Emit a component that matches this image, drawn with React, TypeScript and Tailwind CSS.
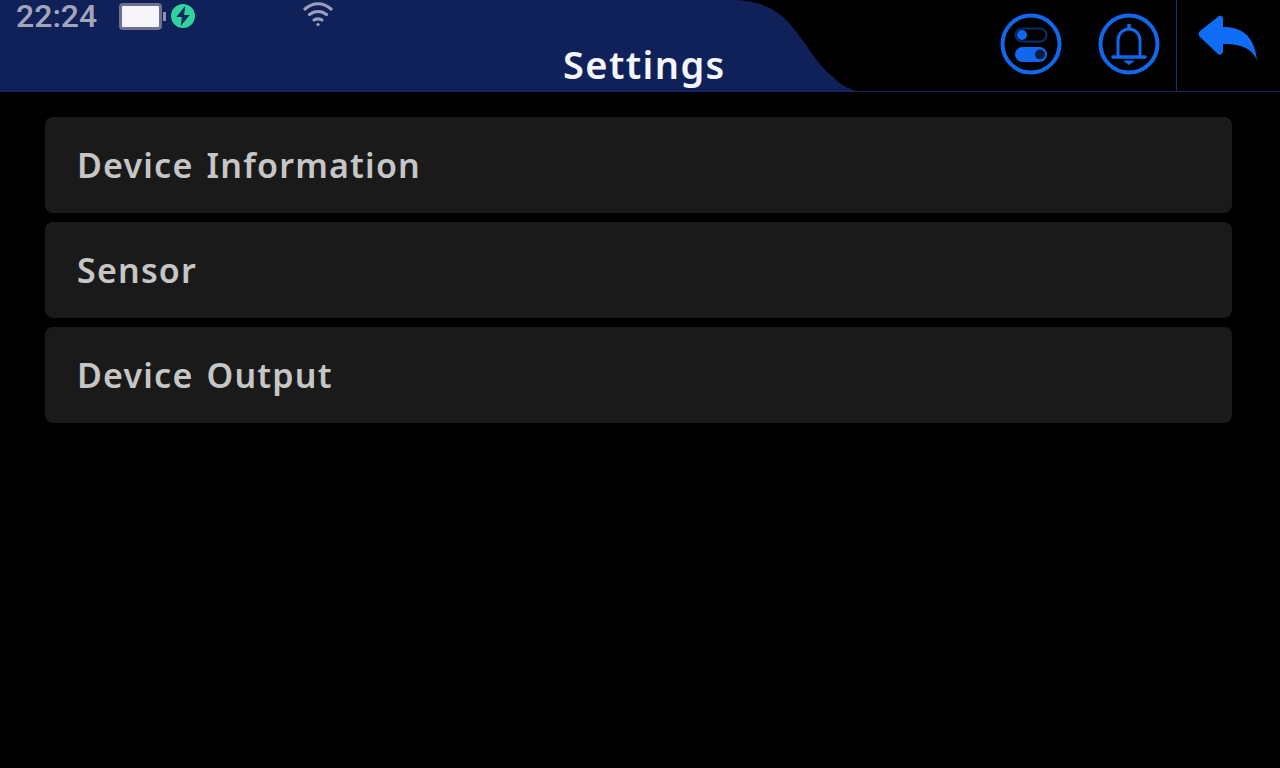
import React from 'react'

const items = ['Device Information', 'Sensor', 'Device Output']

const TogglesIcon = () => (
  <svg width="64" height="64" viewBox="0 0 64 64" fill="none">
    <circle cx="32" cy="32" r="28.5" stroke="#1168ee" strokeWidth="4" />
    <rect x="16.5" y="16.5" width="31" height="13" rx="6.5" stroke="#1168ee" strokeWidth="2" opacity="0.45" />
    <circle cx="23" cy="23" r="5" fill="#1168ee" />
    <rect x="16" y="35" width="32" height="15" rx="7.5" fill="#1168ee" />
    <circle cx="41" cy="42.500" r="5" fill="#0a1a40" />
  </svg>
)

const BellIcon = () => (
  <svg width="64" height="64" viewBox="0 0 64 64" fill="none">
    <circle cx="32" cy="32" r="28.500" stroke="#1168ee" strokeWidth="4" />
    <path d="M21 44V28a11 11 0 0 1 22 0v16" stroke="#1168ee" strokeWidth="3" />
    <path d="M32 12v6" stroke="#1168ee" strokeWidth="3.500" />
    <path d="M16 45h32" stroke="#1168ee" strokeWidth="3.500" strokeLinecap="round" />
    <path d="M26 48.500h12l-6 4.500z" fill="#1168ee" />
  </svg>
)

const BackIcon = () => (
  <svg width="64" height="50" viewBox="0 0 64 50" fill="#0f6df5">
    <path d="M22 1c2-1 4 0 4 3v8c16 0 31 6 34 33-6-13-18-16-34-16v7c0 3-3 5-5 3L3 22c-2-2-2-4 0-6z" />
  </svg>
)

const WifiIcon = () => (
  <svg width="30" height="26" viewBox="0 0 30 26" fill="none" stroke="#9b9fb8" strokeWidth="3.200" strokeLinecap="round">
    <path d="M2 8c8-7 18-7 26 0" />
    <path d="M6.500 13.500c5-4 12-4 17 0" />
    <path d="M11 19c2.500-1.500 5.500-1.500 8 0" />
    <circle cx="15" cy="23.500" r="1.200" fill="#9b9fb8" strokeWidth="1" />
  </svg>
)

export default function App() {
  return (
    <div className="h-[768px] w-[1280px] overflow-hidden bg-black font-['Noto_Sans',sans-serif]">
      {/* Header */}
      <header className="relative flex h-[92px] border-b border-[#15265f]">
        <svg className="absolute left-0 top-0" width="860" height="92" viewBox="0 0 860 92">
          <path d="M0 0H735C762 1 778 10 790 24C806 43 820 68 832 76C840 84 846 88 856 91H0z" fill="#10215a" />
        </svg>

        <div className="relative flex h-[32px] items-center pl-[16px]">
          <span className="w-[103px] font-['Roboto',sans-serif] text-[32px] leading-none font-medium text-[#a3a6ba]">22:24</span>
          <div className="flex h-[28px] w-[44px] items-center">
            <div className="h-[27px] w-[43px] rounded-[4px] border-[3px] border-[#6d7190] bg-[#f8f5fa]" />
          </div>
          <div className="h-[9px] w-[3px] bg-[#8e92aa]" />
          <div className="ml-[5px] flex h-[24px] w-[24px] items-center justify-center rounded-full bg-[#2fd3a0]">
            <svg width="16" height="20" viewBox="0 0 14 18" fill="#0c2a5c">
              <path d="M9 0 1 10h5l-1 8 8-10H8z" />
            </svg>
          </div>
          <div className="ml-[108px] pb-[4px]">
            <WifiIcon />
          </div>
        </div>

        <h1 className="absolute left-[563px] top-[36px] text-[38px] leading-[56px] font-semibold tracking-[1.400px] text-[#f4f6fb]">Settings</h1>

        <div className="relative ml-auto flex">
          <div className="flex items-center gap-[34px] pr-[15px] pb-[3px]">
            <TogglesIcon />
            <BellIcon />
          </div>
          <div className="flex w-[104px] justify-start border-l border-[#15306b] pt-[15px] pl-[20px]">
            <BackIcon />
          </div>
        </div>
      </header>

      {/* Menu rows */}
      <main className="flex flex-col gap-[9px] pt-[25px] pr-[48px] pl-[45px]">
        {items.map((item) => (
          <div key={item} className="flex h-[96px] items-center rounded-[8px] bg-[#1a1a1a] pl-[32px]">
            <span className="text-[34px] font-semibold tracking-[1.200px] [word-spacing:3px] text-[#c6c6c6]">{item}</span>
          </div>
        ))}
      </main>
    </div>
  )
}
